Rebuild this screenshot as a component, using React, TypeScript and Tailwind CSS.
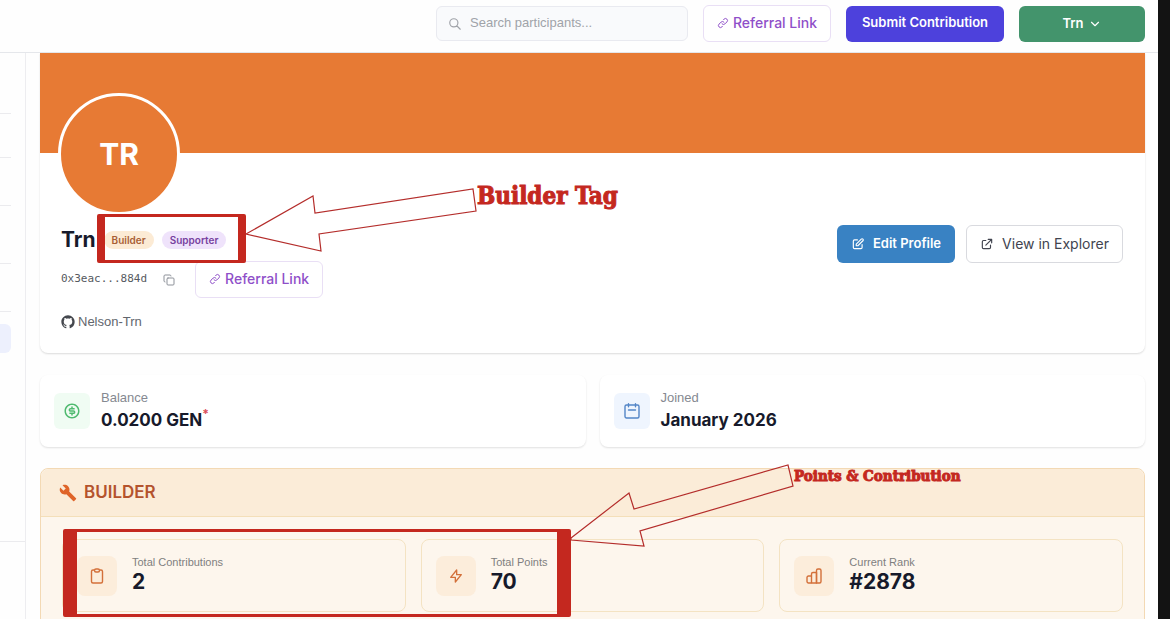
import type { ReactNode } from "react";
import { ChevronDown, Copy } from "lucide-react";
import {
  HiOutlineExternalLink,
  HiOutlineLightningBolt,
  HiOutlineLink,
  HiOutlinePencilAlt,
  HiOutlineSearch,
} from "react-icons/hi";
import { MdBuild } from "react-icons/md";
import { RiGithubFill, RiMoneyDollarCircleLine } from "react-icons/ri";

function ReferralButton() {
  return (
    <button className="flex h-[37px] w-32 items-center justify-center gap-1 rounded-md border border-[#e9dff5] bg-white pb-0.5 text-sm font-medium text-[#8f4fc9]">
      <HiOutlineLink className="h-3 w-3" />
      Referral Link
    </button>
  );
}

function ClipboardIcon() {
  return (
    <svg viewBox="0 0 16 16" className="h-4 w-4" fill="none" stroke="currentColor" strokeWidth="1.4" strokeLinejoin="round">
      <path d="M5.5 2H4a1.5 1.5 0 0 0-1.5 1.5v10A1.5 1.5 0 0 0 4 15h8a1.5 1.5 0 0 0 1.5-1.5v-10A1.5 1.5 0 0 0 12 2h-1.5" />
      <path d="M5.5 2.5A1.5 1.5 0 0 1 7 1h2a1.5 1.5 0 0 1 0 3H7a1.5 1.5 0 0 1-1.5-1.5Z" />
    </svg>
  );
}

function RankIcon() {
  return (
    <svg viewBox="0 0 16 16" className="h-4 w-4" fill="none" stroke="currentColor" strokeWidth="1.4" strokeLinejoin="round">
      <path d="M5.5 15h-3A1.5 1.5 0 0 1 1 13.5v-4A1.5 1.5 0 0 1 2.5 8h3" />
      <path d="M5.5 15V6A1.5 1.5 0 0 1 7 4.5h3.5V15Z" />
      <path d="M10.5 15V2.500A1.5 1.5 0 0 1 12 1h1.500A1.5 1.5 0 0 1 15 2.500v11a1.5 1.5 0 0 1-1.5 1.5Z" />
    </svg>
  );
}

function CalendarIcon() {
  return (
    <svg viewBox="0 0 16 16" className="h-4 w-4" fill="none" stroke="currentColor" strokeWidth="1.4" strokeLinecap="round">
      <rect x="1" y="2" width="14" height="13" rx="1.5" />
      <path d="M4.5 .7v3M11.5 .7v3M4.5 7h7" />
    </svg>
  );
}

function InfoCard({ icon, tint, label, children }: { icon: ReactNode; tint: string; label: string; children: ReactNode }) {
  return (
    <div className="flex h-[72px] items-center gap-[11px] rounded-lg bg-white px-3.5 shadow-[0_1px_2px_rgba(0,0,0,0.12)]">
      <div className={`flex h-9 w-9 items-center justify-center rounded-md ${tint}`}>{icon}</div>
      <div className="pb-0.5">
        <p className="font-['Liberation_Sans',sans-serif] text-[13px] leading-5 text-[#858991]">{label}</p>
        <p className="text-[17px] leading-6 font-bold text-[#171a2b]">{children}</p>
      </div>
    </div>
  );
}

function StatCard({ icon, label, value }: { icon: ReactNode; label: string; value: string }) {
  return (
    <div className="flex h-[73px] items-center gap-[15px] rounded-lg border border-[#f4e3c3] px-3.5">
      <div className="flex h-10 w-10 items-center justify-center rounded-lg bg-[#fceddb] text-[#d3703a]">{icon}</div>
      <div className="pb-1">
        <p className="font-['Liberation_Sans',sans-serif] text-[11px] leading-4 text-[#7f7f7f]">{label}</p>
        <p className="text-[21px] leading-6 font-bold text-[#171a2b]">{value}</p>
      </div>
    </div>
  );
}

export default function App() {
  return (
    <div className="relative flex h-screen overflow-hidden bg-[#fefefe] font-['Inter','Liberation_Sans',sans-serif]">
      <div className="flex min-w-0 flex-1 flex-col">
        {/* Top bar */}
        <header className="flex h-[53px] shrink-0 items-start justify-end gap-[15px] border-b border-gray-200 pt-[5px] pr-[13px]">
          <label className="mt-px flex h-[35px] w-[252px] items-center gap-2 rounded-md border border-[#e9eaf0] bg-[#f9fafc] px-[11px] text-[#a0a3a9]">
            <HiOutlineSearch className="h-3.5 w-3.5 shrink-0" />
            <input
              type="search"
              aria-label="Search participants"
              placeholder="Search participants..."
              className="min-w-0 flex-1 bg-transparent pb-0.5 font-['Liberation_Sans',sans-serif] text-[13px] outline-none placeholder:text-[#a0a3a9]"
            />
          </label>
          <ReferralButton />
          <button className="mt-px h-9 w-[158px] rounded-md bg-[#4d41dc] pb-0.5 text-[13px] font-semibold text-white">
            Submit Contribution
          </button>
          <button className="mt-px flex h-9 w-[126px] items-center justify-center gap-1 rounded-md bg-[#43946c] text-[13px] font-semibold text-white">
            Trn
            <ChevronDown className="h-3.5 w-3.5" strokeWidth={2} />
          </button>
        </header>

        <div className="flex min-h-0 flex-1">
          {/* Sidebar edge */}
          <aside className="w-[26px] shrink-0 border-r border-[#ededf0] pr-3.5">
            <div className="mt-[60px] h-px bg-[#ebebee]" />
            <div className="mt-[43px] h-px bg-[#ebebee]" />
            <div className="mt-[47px] h-px bg-[#ebebee]" />
            <div className="mt-[57px] h-px bg-[#ebebee]" />
            <div className="mt-[47px] h-px bg-[#ebebee]" />
            <div className="mt-3 h-[29px] rounded-r-md bg-[#edf0fd]" />
            <div className="mt-[188px] -mr-3.5 h-px bg-[#ebebee]" />
          </aside>

          <main className="min-w-0 flex-1 pr-[13px] pl-3.5">
            {/* Profile */}
            <section className="h-[300px] rounded-b-lg bg-white shadow-[0_1px_2px_rgba(0,0,0,0.14)]">
              <div className="h-[100px] bg-[#e77a34]" />
              <div className="pr-[22px] pl-[21px]">
                <div className="-mt-[60px] -ml-[3px] flex h-[122px] w-[122px] items-center justify-center rounded-full border-[3px] border-white bg-[#e77a34] text-3xl font-bold text-white">
                  TR
                </div>
                <div className="flex items-start justify-between pt-2.5">
                  <div>
                    <div className="flex h-[30px] items-center gap-2">
                      <h1 className="text-[21px] font-bold text-[#171a2b]">Trn</h1>
                      <span className="rounded-full bg-[#fcebd5] px-2 text-[10px] leading-[18px] font-semibold text-[#a95f35]">Builder</span>
                      <span className="rounded-full bg-[#efe3fb] px-2 text-[10px] leading-[18px] font-semibold text-[#77419f]">Supporter</span>
                    </div>
                    <div className="mt-1.5 flex items-center">
                      <span className="font-['DejaVu_Sans_Mono',monospace] text-[11px] text-[#555960]">0x3eac...884d</span>
                      <button aria-label="Copy address" className="mr-5 ml-4 text-[#8d9199]">
                        <Copy className="h-3 w-3" />
                      </button>
                      <ReferralButton />
                    </div>
                    <a
                      href="#github"
                      className="mt-3.5 flex items-center gap-0.5 font-['Liberation_Sans',sans-serif] text-[13px] leading-5 text-[#62666d]"
                    >
                      <RiGithubFill className="-ml-px h-4 w-4 text-[#45484e]" />
                      Nelson-Trn
                    </a>
                  </div>
                  <div className="flex gap-[11px]">
                    <button className="flex h-[38px] w-[118px] items-center justify-center gap-2 rounded-md bg-[#3982c3] text-[13px] font-semibold text-white">
                      <HiOutlinePencilAlt className="h-3.5 w-3.5" />
                      Edit Profile
                    </button>
                    <a
                      href="#explorer"
                      className="flex h-[38px] w-[157px] items-center justify-center gap-2 rounded-md border border-[#d9dadf] bg-white text-sm text-[#41444f]"
                    >
                      <HiOutlineExternalLink className="h-3.5 w-3.5" />
                      View in Explorer
                    </a>
                  </div>
                </div>
              </div>
            </section>

            {/* Account info */}
            <section className="mt-[22px] grid grid-cols-2 gap-3.5">
              <InfoCard tint="bg-[#f0fcf3] text-[#4fba6f]" label="Balance" icon={<RiMoneyDollarCircleLine className="h-[18px] w-[18px]" />}>
                0.0200 GEN
                <sup className="-top-2 text-xs text-[#dc4e57]">*</sup>
              </InfoCard>
              <InfoCard tint="bg-[#eff5fe] text-[#5486c7]" label="Joined" icon={<CalendarIcon />}>
                January 2026
              </InfoCard>
            </section>

            {/* Builder */}
            <section className="mt-[21px] rounded-lg border border-[#f3d9b4] bg-[#fdf6ed]">
              <h2 className="flex h-12 items-center gap-[7px] rounded-t-lg border-b border-[#f4dfb9] bg-[#fbecd8] px-[18px] text-[17px] font-semibold text-[#b4532d]">
                <MdBuild className="h-[18px] w-[18px] text-[#df6429]" />
                BUILDER
              </h2>
              <div className="grid grid-cols-3 gap-[15px] px-[21px] py-[22px]">
                <StatCard label="Total Contributions" value="2" icon={<ClipboardIcon />} />
                <StatCard label="Total Points" value="70" icon={<HiOutlineLightningBolt className="h-4 w-4" />} />
                <StatCard label="Current Rank" value="#2878" icon={<RankIcon />} />
              </div>
            </section>
          </main>
        </div>
      </div>
      <div className="w-3 shrink-0 bg-[#131313]" />

      {/* Callouts */}
      <div className="pointer-events-none absolute inset-0">
        <div className="absolute top-[214px] left-[97px] h-[49px] w-[149px] rounded-xs border-x-8 border-y-[3px] border-[#c4281f]" />
        <div className="absolute top-[529px] left-[63px] h-[88px] w-[508px] rounded-xs border-x-[14px] border-y-[3px] border-[#c4281f]" />
        <svg className="absolute top-0 left-0 h-[619px] w-[1170px]" fill="none" stroke="#b42d2b" strokeWidth="1.2">
          <path d="M246 234 313 196 315 213 473 189 476 211 319 234 321 251Z" />
          <path d="M571 538 629 493 634 509 788 465 793 486 640 531 644 546 571 540Z" />
        </svg>
        <p className="absolute top-[180px] left-[477px] font-['DejaVu_Serif_Condensed','DejaVu_Serif',serif] text-2xl font-bold whitespace-nowrap text-[#c4281f] [-webkit-text-stroke:1px_#c4281f]">
          Builder Tag
        </p>
        <p className="absolute top-[465px] left-[794px] font-['DejaVu_Serif_Condensed','DejaVu_Serif',serif] text-[15px] font-bold whitespace-nowrap text-[#c4281f] [-webkit-text-stroke:1px_#c4281f]">
          Points &amp; Contribution
        </p>
      </div>
    </div>
  );
}
